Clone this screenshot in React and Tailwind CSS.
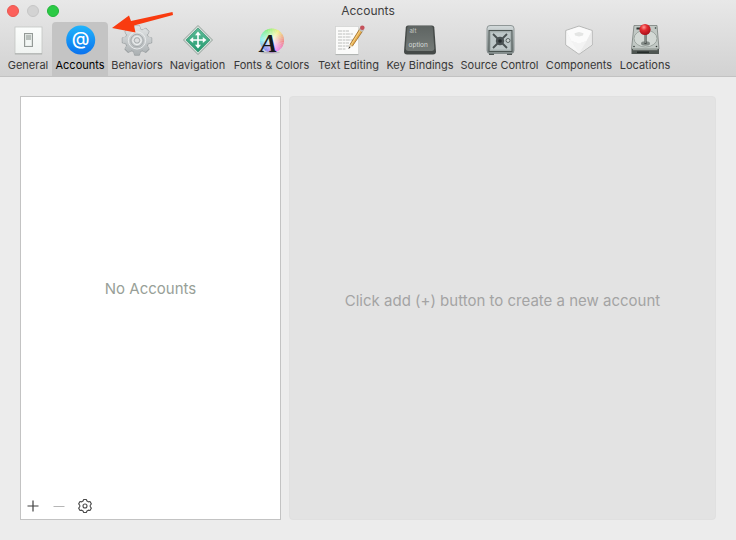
import React from "react";

const polar = (cx, cy, r, deg) => {
  const a = (deg * Math.PI) / 180;
  return `${(cx + r * Math.sin(a)).toFixed(2)} ${(cy - r * Math.cos(a)).toFixed(2)}`;
};

const gearPath = (cx, cy, teeth, outer, inner) => {
  const step = 360 / teeth;
  const pts = [];
  for (let i = 0; i < teeth; i++) {
    const a = i * step;
    pts.push(polar(cx, cy, inner, a - step * 0.36));
    pts.push(polar(cx, cy, outer, a - step * 0.19));
    pts.push(polar(cx, cy, outer, a + step * 0.19));
    pts.push(polar(cx, cy, inner, a + step * 0.36));
  }
  return `M${pts.join("L")}Z`;
};

const Icon = ({ children }) => (
  <svg className="block size-8 shrink-0 overflow-visible" viewBox="0 0 32 32" aria-hidden="true">
    {children}
  </svg>
);

const GeneralIcon = () => (
  <Icon>
    <defs>
      <linearGradient id="plate" x1="0" y1="0" x2="0" y2="1">
        <stop offset="0" stopColor="#fbfdfc" />
        <stop offset="1" stopColor="#f0f3f1" />
      </linearGradient>
    </defs>
    <rect x="3" y="3" width="27" height="27" fill="url(#plate)" stroke="#c3c6c4" strokeWidth="0.8" />
    <path d="M3 29.8H30" stroke="#a4a7a5" strokeWidth="0.9" />
    <rect x="12.5" y="9.5" width="8" height="13" fill="#e0e5e2" stroke="#949a97" />
    <rect x="14" y="11" width="5" height="5" fill="#b9c0bc" />
    <rect x="14" y="16" width="5" height="5.5" fill="#f3f7f5" />
  </Icon>
);

const AccountsIcon = () => (
  <Icon>
    <defs>
      <linearGradient id="blue" x1="0" y1="0" x2="0" y2="1">
        <stop offset="0" stopColor="#20b4fb" />
        <stop offset="1" stopColor="#0b72ee" />
      </linearGradient>
    </defs>
    <circle cx="16.7" cy="16" r="14.5" fill="url(#blue)" />
    <text x="16.7" y="21.3" textAnchor="middle" fontFamily="Inter, sans-serif" fontSize="18" fontWeight="500" fill="#fff">@</text>
  </Icon>
);

const BehaviorsIcon = () => (
  <Icon>
    <defs>
      <linearGradient id="steel" x1="0" y1="0" x2="0" y2="1">
        <stop offset="0" stopColor="#e2e5e6" />
        <stop offset="1" stopColor="#acb1b3" />
      </linearGradient>
    </defs>
    <path d={gearPath(16, 16.4, 8, 14.6, 11.4)} fill="#9da2a4" stroke="#9da2a4" strokeWidth="1.6" strokeLinejoin="round" />
    <path d={gearPath(16, 16.2, 8, 14.2, 11)} fill="url(#steel)" stroke="url(#steel)" strokeWidth="1" strokeLinejoin="round" />
    <circle cx="16" cy="16.4" r="8.6" fill="none" stroke="#eceeef" strokeWidth="0.9" />
    <circle cx="16" cy="16.4" r="6.2" fill="#c6cacc" stroke="#a1a6a8" strokeWidth="0.9" />
    <circle cx="16" cy="16.4" r="4.3" fill="#d8dbdc" stroke="#f0f2f2" strokeWidth="1" />
    <circle cx="16" cy="16.4" r="2.7" fill="#dcdedf" stroke="#9ca1a3" strokeWidth="0.8" />
  </Icon>
);

const NavigationIcon = () => (
  <Icon>
    <defs>
      <linearGradient id="green" x1="0" y1="0" x2="0" y2="1">
        <stop offset="0" stopColor="#5dbb97" />
        <stop offset="1" stopColor="#259b70" />
      </linearGradient>
    </defs>
    <path d="M16 1.5 30.5 16 16 30.5 1.5 16Z" fill="#d2dfd9" stroke="#8b9891" strokeWidth="0.9" strokeLinejoin="round" />
    <path d="M16 4 28 16 16 28 4 16Z" fill="url(#green)" stroke="#2c8a68" strokeWidth="0.6" />
    <path d="M16 10V22M10 16H22" stroke="#fff" strokeWidth="1.6" />
    <path d="M16 7.6 19 11.2H13ZM16 24.4 19 20.8H13ZM7.6 16 11.2 13V19ZM24.4 16 20.8 13V19Z" fill="#fff" />
  </Icon>
);

const FontsIcon = () => (
  <Icon>
    <defs>
      <radialGradient id="wash">
        <stop offset="0" stopColor="#fff" stopOpacity="0.9" />
        <stop offset="1" stopColor="#fff" stopOpacity="0.15" />
      </radialGradient>
    </defs>
    {Array.from({ length: 36 }, (_, i) => (
      <path
        key={i}
        d={`M16 16.5L${polar(16, 16.5, 12, i * 10 - 1)}A12 12 0 0 1 ${polar(16, 16.5, 12, i * 10 + 10)}Z`}
        fill={`hsl(${(450 - i * 10) % 360} 78% 68%)`}
      />
    ))}
    <circle cx="16" cy="16.5" r="12" fill="url(#wash)" />
    <ellipse cx="14" cy="28.6" rx="10" ry="1" fill="#000" opacity="0.15" />
    <text x="4" y="28" fontFamily="Liberation Serif, serif" fontSize="26" fontStyle="italic" fontWeight="700" fill="#17191b">A</text>
  </Icon>
);

const TextEditingIcon = () => (
  <Icon>
    <rect x="2.5" y="2.5" width="23" height="28" fill="#fbfbfa" stroke="#d3d4d3" strokeWidth="0.8" />
    <path d="M2.5 30.6H25.5" stroke="#aeb0af" />
    <path d="M5 7H16M5 10H20M5 13H18M5 16H20M5 19H16M5 22H18M5 25H13" stroke="#b4b7b6" strokeWidth="0.9" strokeDasharray="4 0.7 2.5 0.6" />
    <path d="M17 20.5 27 4.5 30 6.5 19.5 22Z" fill="#e8ad4c" stroke="#996b2b" strokeWidth="0.8" />
    <path d="M18 21 28 5.2" stroke="#f7d488" strokeWidth="1" />
    <path d="M26 6 27.4 3.8 30.8 6 29.3 8.2Z" fill="#bcc0bf" />
    <circle cx="29.3" cy="3.8" r="2.3" fill="#c5525b" />
    <path d="M15.6 24.6 17 20.5 19.5 22Z" fill="#ecd2a4" />
    <path d="M15.4 25 16.2 22.6 17.5 23.4Z" fill="#353331" />
  </Icon>
);

const KeyBindingsIcon = () => (
  <Icon>
    <defs>
      <linearGradient id="key" x1="0" y1="0" x2="0" y2="1">
        <stop offset="0" stopColor="#5e6462" />
        <stop offset="1" stopColor="#747a77" />
      </linearGradient>
    </defs>
    <path d="M4 1.5H28Q30 1.5 30.3 3.5L32 27.5Q32 30.5 29 30.5H3Q0 30.5 0 27.5L1.8 3.5Q2 1.5 4 1.5Z" fill="#454a48" />
    <path d="M5 2H27Q28.6 2 28.8 3.7L30.3 24.6Q30.4 27 28 27H4Q1.6 27 1.7 24.6L3.2 3.7Q3.4 2 5 2Z" fill="url(#key)" />
    <text x="5.5" y="9" fontFamily="Inter, sans-serif" fontSize="6" fill="#c3c8c5">alt</text>
    <text x="4.5" y="23" fontFamily="Inter, sans-serif" fontSize="6.5" fill="#d6dad8">option</text>
  </Icon>
);

const SourceControlIcon = () => (
  <Icon>
    <defs>
      <linearGradient id="safe" x1="0" y1="0" x2="0" y2="1">
        <stop offset="0" stopColor="#d3dadb" />
        <stop offset="1" stopColor="#87908f" />
      </linearGradient>
    </defs>
    <path d="M5 29H10V31H5ZM23 29H28V31H23Z" fill="#4e5554" />
    <rect x="3" y="1.5" width="27" height="28" rx="3" fill="url(#safe)" stroke="#7c8585" strokeWidth="0.8" />
    <rect x="5" y="6.5" width="23" height="21" fill="#a9b3b3" stroke="#4b5452" strokeWidth="1.1" />
    <rect x="7" y="8.5" width="19" height="17" fill="#bdc7c8" />
    <path d="M9 10 23 24M23 10 9 24" stroke="#4a5253" strokeWidth="1.8" />
    <circle cx="16" cy="17" r="4.2" fill="#4a5254" />
    <circle cx="16" cy="17" r="1.8" fill="#252b2d" />
    <circle cx="24" cy="16.5" r="2" fill="#ced5d5" stroke="#4f5857" strokeWidth="0.9" />
  </Icon>
);

const ComponentsIcon = () => (
  <Icon>
    <path d="M16 2 29.3 6.5V21L16 30.3 2.7 21V6.5Z" fill="#f1f1f1" stroke="#b9bab9" strokeLinejoin="round" />
    <path d="M16 3 28.5 7 23.5 17 16 19.5 8.5 17 3.5 7Z" fill="#fbfbfb" />
    <path d="M3.5 8 8.5 17 16 29.3 3.5 20.6Z" fill="#f7f7f7" />
    <path d="M28.5 8 23.5 17 16 29.3 28.5 20.6Z" fill="#ebebeb" />
    <path d="M8.5 17 16 19.5 23.5 17 16 29.3Z" fill="#f3f3f3" />
    <path d="M11.5 9.2 16 8 20.5 9.2 20 11.5 16 12.5 12 11.5Z" fill="#e4e5e4" />
  </Icon>
);

const LocationsIcon = () => (
  <Icon>
    <defs>
      <radialGradient id="ball" cx="0.4" cy="0.3" r="0.7">
        <stop offset="0" stopColor="#ff9a95" />
        <stop offset="0.4" stopColor="#e32b30" />
        <stop offset="1" stopColor="#a80f19" />
      </radialGradient>
    </defs>
    <path d="M5 1.5H28L30 25H2.5Z" fill="#c1c8c4" stroke="#79807c" strokeWidth="0.8" />
    <path d="M2.5 25H30V30H2.5Z" fill="#4f5652" />
    <path d="M4 25.7H28.5" stroke="#adb4b0" />
    <path d="M8 28.2H20" stroke="#222826" strokeWidth="1.4" />
    <ellipse cx="16.5" cy="14.5" rx="11.5" ry="8.5" fill="#d3d9d5" stroke="#929a96" strokeWidth="0.8" />
    <ellipse cx="16.5" cy="19.5" rx="4.5" ry="2.2" fill="#838b87" />
    <path d="M16.5 10V20" stroke="#474d4a" strokeWidth="2.2" />
    <path d="M16.2 10V19" stroke="#c6ccc9" strokeWidth="0.7" />
    <path d="M7.5 4.5H12" stroke="#303633" strokeWidth="2" />
    <circle cx="26.5" cy="4" r="0.8" fill="#303633" />
    <circle cx="5" cy="22.5" r="0.8" fill="#303633" />
    <circle cx="27.5" cy="22.5" r="0.8" fill="#303633" />
    <circle cx="16" cy="5.5" r="5.6" fill="url(#ball)" />
  </Icon>
);

const TABS = [
  ["General", GeneralIcon],
  ["Accounts", AccountsIcon],
  ["Behaviors", BehaviorsIcon],
  ["Navigation", NavigationIcon],
  ["Fonts & Colors", FontsIcon],
  ["Text Editing", TextEditingIcon],
  ["Key Bindings", KeyBindingsIcon],
  ["Source Control", SourceControlIcon],
  ["Components", ComponentsIcon],
  ["Locations", LocationsIcon],
];

export default function App() {
  return (
    <div className="flex min-h-screen flex-col bg-[#ececec] font-['Inter',sans-serif] text-[#404040]">
      <header className="relative border-b border-[#c2c2c2] bg-linear-to-b from-[#e8e8e8] to-[#d2d2d2]">
        <div className="grid h-[22px] grid-cols-[1fr_auto_1fr] items-center px-[7px]">
          <div className="flex gap-2">
            <button aria-label="Close" className="size-3 rounded-full border border-[#e9574f] bg-[#fc605b]" />
            <button aria-label="Minimize" className="size-3 rounded-full border border-[#c6c6c6] bg-[#d3d3d3]" />
            <button aria-label="Zoom" className="size-3 rounded-full border border-[#21b53a] bg-[#2bca45]" />
          </div>
          <h1 className="text-xs">Accounts</h1>
        </div>
        <nav
          className="grid grid-cols-[48px_56px_58px_63px_85px_69px_74px_85px_74px_58px] px-1"
          aria-label="Preferences"
        >
          {TABS.map(([label, Glyph]) => (
            <button
              key={label}
              aria-current={label === "Accounts" ? "page" : undefined}
              className={
                "flex flex-col items-center gap-px whitespace-nowrap rounded-t-sm pt-0.5 pb-[3px] text-[11px] leading-4 " +
                (label === "Accounts" ? "bg-[#c4c4c4] text-black" : "text-[#383838]")
              }
            >
              <Glyph />
              {label}
            </button>
          ))}
        </nav>
        <svg className="pointer-events-none absolute top-2 left-28 h-7 w-16" viewBox="0 0 64 28" aria-hidden="true">
          <path d="M60.5 4 61 7 22 17.5 23.5 24.5 0 20 17 7.5 19 13Z" fill="#f93b10" />
        </svg>
      </header>

      <main className="flex flex-1 gap-2 px-5 pt-[19px] pb-5">
        <section className="flex w-[261px] shrink-0 flex-col border border-[#c3c3c3] bg-white" aria-label="Account list">
          <div className="flex flex-1 items-center justify-center pb-3 text-[15px] text-[#989f98]">
            <p>No Accounts</p>
          </div>
          <div className="flex h-[26px] items-center gap-[10px] px-1">
            <button aria-label="Add account" className="grid size-4 place-items-center">
              <svg className="size-4" viewBox="0 0 16 16"><path d="M8 2.5V13.5M2.5 8H13.5" stroke="#3f3f3f" strokeWidth="1.2" /></svg>
            </button>
            <button aria-label="Remove account" disabled className="grid size-4 place-items-center">
              <svg className="size-4" viewBox="0 0 16 16"><path d="M2.5 8.5H13.5" stroke="#b6b6b6" /></svg>
            </button>
            <button aria-label="Account options" className="grid size-4 place-items-center">
              <svg className="size-4" viewBox="0 0 16 16" fill="none" stroke="#4b4b4b" strokeWidth="1.1" strokeLinejoin="round">
                <path d={gearPath(8, 8, 6, 6.7, 5.3)} />
                <circle cx="8" cy="8" r="2" />
              </svg>
            </button>
          </div>
        </section>
        <section className="flex flex-1 items-center justify-center rounded-sm border border-[#e0e0e0] bg-[#e3e3e3] pb-3.5 text-[15px] text-[#a4a4a4]" aria-label="Account details">
          <p>Click add (+) button to create a new account</p>
        </section>
      </main>
    </div>
  );
}
